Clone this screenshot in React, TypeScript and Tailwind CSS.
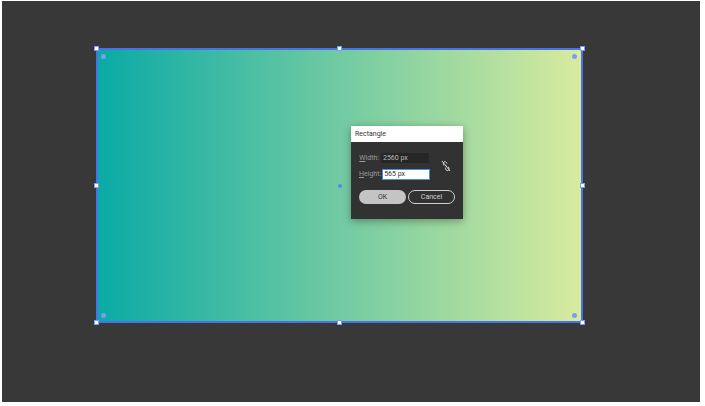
const Handle = () => <span className="h-[5px] w-[5px] border border-[#7f9cf0] bg-white" />;

const Dot = () => <span className="h-[5px] w-[5px] rounded-full bg-[#7f9cf0]" />;

const App = () => {
  return (
    <div className="h-[406px] w-[705px] overflow-hidden bg-white pl-[2px] pt-px font-['Roboto',Arial,sans-serif]">
      <div className="h-[401px] w-[698px] bg-[#383838] pl-[94px] pt-[47px]">
        {/* SELECTED RECTANGLE */}
        <div className="relative h-[275px] w-[487px] border-2 border-[#4a72e8] bg-linear-to-r/srgb from-[#0aaaa6] to-[#d8eb9e]">
          {/* CORNER WIDGETS */}
          <div className="absolute inset-0 flex flex-col justify-between pb-[3px] pl-[3px] pr-[4px] pt-[4px]">
            <div className="flex justify-between">
              <Dot />
              <Dot />
            </div>
            <div className="flex justify-between">
              <Dot />
              <Dot />
            </div>
          </div>

          {/* RESIZE HANDLES */}
          <div className="absolute -inset-[4px] flex flex-col justify-between">
            <div className="flex justify-between">
              <Handle />
              <Handle />
              <Handle />
            </div>
            <div className="flex items-center justify-between">
              <Handle />
              <span className="h-[4px] w-[4px] rounded-full bg-[#4f8cf0]" />
              <Handle />
            </div>
            <div className="flex justify-between">
              <Handle />
              <Handle />
              <Handle />
            </div>
          </div>

          {/* DIALOG */}
          <div className="absolute left-[253px] top-[76px] flex h-[93px] w-[112px] flex-col bg-[#323232] shadow-[0_2px_8px_rgba(0,0,0,0.35)]">
            <div className="flex h-[16px] items-center bg-white pl-[4px] text-[7px] text-[#333333]">
              Rectangle
            </div>
            <div className="flex pl-[8px] pt-[11px]">
              <div className="flex w-[71px] flex-col gap-[6px] text-[7px]">
                <div className="flex h-[10px] items-center justify-end gap-[2px] pr-px text-[#9a9a9a]">
                  <span>
                    <span className="underline">W</span>idth:
                  </span>
                  <span className="flex h-[10px] w-[48px] items-center bg-[#262626] pl-[2px] text-[#b8b8b8]">
                    2560 px
                  </span>
                </div>
                <div className="flex h-[11px] items-center justify-end gap-px text-[#9a9a9a]">
                  <span>
                    <span className="underline">H</span>eight:
                  </span>
                  <span className="flex h-[11px] w-[50px] items-center border border-[#4a8fe0] bg-white pl-px text-[#333333]">
                    565 px
                  </span>
                </div>
              </div>
              {/* BROKEN LINK ICON */}
              <svg className="ml-[11px] mt-[7px]" width="10" height="12" viewBox="0 0 10 12" fill="none" stroke="#d8d8d8" strokeWidth="1">
                <path d="M1 1 9 11" />
                <path d="M3 5.5C2 4 2.2 2.3 3.4 1.8 4.6 1.3 5.6 2.3 6 3.6" />
                <path d="M5 5.5 5.6 7" />
                <path d="M4.4 7.6C4.4 9.2 5.4 11 6.8 10.6 8.2 10.2 8.3 8.4 7.4 6.8" />
              </svg>
            </div>
            <div className="mt-[10px] flex gap-[2px] pl-[8px] text-[7px]">
              <div className="flex h-[14px] w-[47px] items-center justify-center rounded-full bg-[#c4c4c4] text-[#333333]">
                OK
              </div>
              <div className="flex h-[14px] w-[47px] items-center justify-center rounded-full border border-[#d0d0d0] text-[#d0d0d0]">
                Cancel
              </div>
            </div>
          </div>
        </div>
      </div>
    </div>
  );
};

export default App;
